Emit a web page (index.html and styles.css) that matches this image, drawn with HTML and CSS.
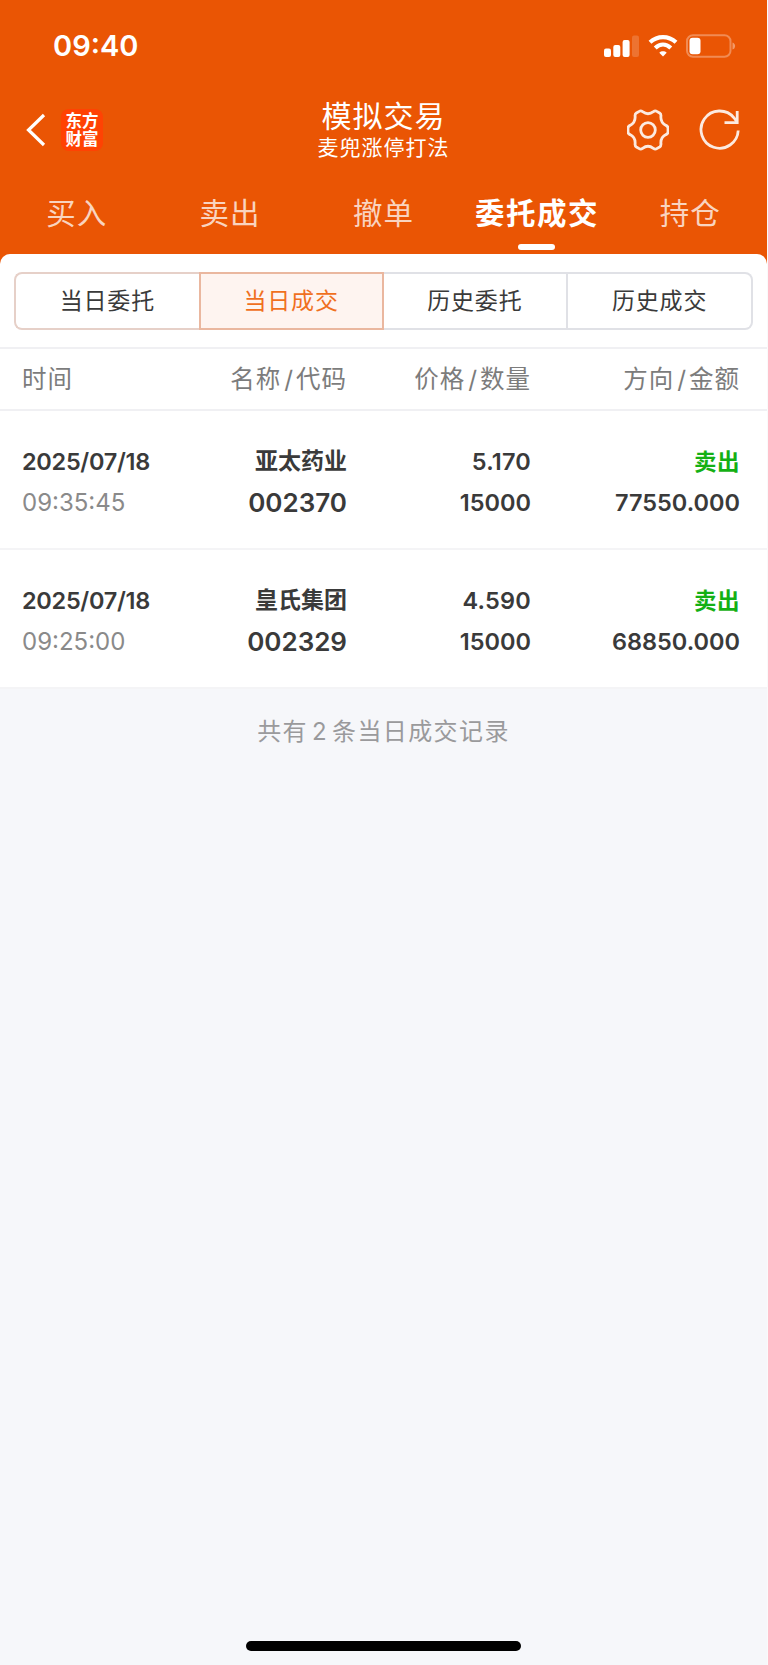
FILE: index.html
```html
<!DOCTYPE html>
<html lang="zh-CN">
<head>
  <meta charset="UTF-8">
  <meta name="viewport" content="width=device-width, initial-scale=1.0">
  <title>模拟交易</title>
  <link rel="stylesheet" href="styles.css">
</head>
<body>
  <div class="page">
    <header class="header">
      <div class="status-bar">
        <span class="status-time">09:40</span>
        <div class="status-icons">
          <svg class="signal" viewBox="0 0 36 24">
            <rect x="0" y="14.5" width="7" height="8.5" rx="2"/>
            <rect x="9.3" y="11" width="7" height="12" rx="2"/>
            <rect x="18.6" y="6" width="7" height="17" rx="2"/>
            <rect x="28" y="1.5" width="7" height="21.5" rx="2" opacity="0.18"/>
          </svg>
          <svg class="wifi" viewBox="0 0 30 24">
            <path d="M2 8.200C9.500 1.400 20.500 1.400 28 8.200"/>
            <path d="M7.200 14C12 9.600 18 9.600 22.800 14"/>
            <path class="wifi-dot" d="M15 22.500L11.300 18.700C13.300 16.800 16.700 16.800 18.700 18.700Z"/>
          </svg>
          <svg class="battery" viewBox="0 0 50 24">
            <rect class="battery-case" x="1" y="1.200" width="43.500" height="21.600" rx="6"/>
            <rect class="battery-level" x="3.500" y="3.700" width="11" height="16.600" rx="3"/>
            <path class="battery-cap" d="M46.500 8.500C50 9.500 50 14.500 46.500 15.500Z"/>
          </svg>
        </div>
      </div>

      <div class="nav-bar">
        <div class="nav-left">
          <svg class="back-icon" viewBox="0 0 20 34">
            <polyline points="18,2 2.500,17 18,32"/>
          </svg>
          <div class="brand"><span>东方</span><span>财富</span></div>
        </div>
        <div class="nav-title">
          <div class="title">模拟交易</div>
          <div class="subtitle">麦兜涨停打法</div>
        </div>
        <div class="nav-right">
          <svg class="nav-icon" viewBox="0 0 42 42">
            <path d="M12.200 2.400Q13.800 1.300 15.600 2.700Q21 6.700 26.400 2.700Q28.200 1.300 29.800 2.400L32.600 4Q34.200 5 33.900 7.200Q33.400 13.600 39 16.400Q41 17.300 41 19.200V22.800Q41 24.700 39 25.600Q33.400 28.400 33.900 34.800Q34.200 37 32.600 38L29.800 39.600Q28.200 40.700 26.400 39.300Q21 35.300 15.600 39.300Q13.800 40.700 12.200 39.600L9.400 38Q7.800 37 8.100 34.800Q8.600 28.400 3 25.600Q1 24.700 1 22.800V19.200Q1 17.300 3 16.400Q8.600 13.600 8.100 7.200Q7.800 5 9.400 4Z"/>
            <circle cx="21" cy="21" r="7.300"/>
          </svg>
          <svg class="nav-icon" viewBox="0 0 42 42">
            <path d="M39.200 21.500A18.600 18.600 0 1 1 35 8.800L38 13"/>
            <polyline points="38.200,2 38.200,13.600 25.500,13.600"/>
          </svg>
        </div>
      </div>

      <nav class="tabs">
        <div class="tab">买入</div>
        <div class="tab">卖出</div>
        <div class="tab">撤单</div>
        <div class="tab active">委托成交</div>
        <div class="tab">持仓</div>
      </nav>
    </header>

    <main class="sheet">
      <div class="segments">
        <div class="segment first">当日委托</div>
        <div class="segment selected">当日成交</div>
        <div class="segment">历史委托</div>
        <div class="segment">历史成交</div>
      </div>

      <div class="grid list-head">
        <div>时间</div>
        <div>名称<span class="slash">/</span>代码</div>
        <div>价格<span class="slash">/</span>数量</div>
        <div>方向<span class="slash">/</span>金额</div>
      </div>

      <div class="grid record">
        <div class="date">2025/07/18</div>
        <div class="name">亚太药业</div>
        <div class="price">5.170</div>
        <div class="side">卖出</div>
        <div class="time">09:35:45</div>
        <div class="code">002370</div>
        <div class="num">15000</div>
        <div class="num">77550.000</div>
      </div>

      <div class="grid record">
        <div class="date">2025/07/18</div>
        <div class="name">皇氏集团</div>
        <div class="price">4.590</div>
        <div class="side">卖出</div>
        <div class="time">09:25:00</div>
        <div class="code">002329</div>
        <div class="num">15000</div>
        <div class="num">68850.000</div>
      </div>
    </main>

    <p class="summary">共有<span class="count">2</span>条当日成交记录</p>
    <div class="home-indicator"></div>
  </div>
</body>
</html>
```

FILE: styles.css
```css
:root {
  --brand: #ea5504;
  --page: #f6f7fa;
  --line: #f0f0f3;
  --text: #3a3a3a;
  --muted: #7c7c7c;
}

* {
  box-sizing: border-box;
}

body {
  margin: 0;
  background-color: #fafafa;
  font-family: Inter, "Noto Sans CJK SC", sans-serif;
  color: var(--text);
}

.page {
  display: flex;
  flex-direction: column;
  width: 767px;
  height: 1665px;
  background-color: var(--page);
}

/* Header */
.header {
  height: 264px;
  padding-top: 26px;
  background-color: var(--brand);
  color: #fff;
}

.status-bar {
  display: flex;
  align-items: center;
  justify-content: space-between;
  height: 40px;
  padding: 0 31px 0 53px;
}

.status-time {
  font-size: 29px;
  font-weight: 600;
  line-height: 40px;
}

.status-icons {
  display: flex;
  align-items: center;
  gap: 8px;
}

.status-icons svg {
  display: block;
  height: 24px;
}

.signal {
  width: 36px;
  fill: #fff;
}

.wifi {
  width: 30px;
  fill: none;
  stroke: #fff;
  stroke-width: 4.2;
}

.wifi-dot {
  fill: #fff;
  stroke: none;
}

.battery {
  width: 50px;
}

.battery-case {
  fill: none;
  stroke: #fff;
  stroke-width: 2;
  opacity: 0.32;
}

.battery-level {
  fill: #fff;
}

.battery-cap {
  fill: #fff;
  opacity: 0.4;
}

.nav-bar {
  display: grid;
  grid-template-columns: 1fr auto 1fr;
  align-items: center;
  height: 80px;
  margin-top: 24px;
  padding: 0 26px;
}

.nav-left {
  display: flex;
  align-items: center;
  gap: 15px;
}

.back-icon {
  width: 20px;
  height: 34px;
  fill: none;
  stroke: #fff;
  stroke-width: 3.2;
}

.brand {
  display: flex;
  flex-direction: column;
  align-items: center;
  justify-content: center;
  width: 42px;
  height: 42px;
  border-radius: 8px;
  background-color: #ff4203;
  font-size: 16.5px;
  font-weight: 700;
  line-height: 18px;
}

.nav-title {
  text-align: center;
}

.title {
  font-size: 30px;
  line-height: 36px;
  letter-spacing: 1px;
}

.subtitle {
  font-size: 21px;
  line-height: 28px;
  letter-spacing: 1px;
}

.nav-right {
  display: flex;
  justify-content: flex-end;
  gap: 30px;
}

.nav-icon {
  width: 42px;
  height: 42px;
  fill: none;
  stroke: #fff;
  stroke-width: 2.8;
  opacity: 0.88;
}

.tabs {
  display: grid;
  grid-template-columns: repeat(5, 1fr);
  margin-top: 18px;
}

.tab {
  display: flex;
  flex-direction: column;
  align-items: center;
  font-size: 29.5px;
  line-height: 50px;
  letter-spacing: 1px;
  color: rgba(255, 255, 255, 0.75);
}

.tab.active {
  color: #fff;
  font-weight: 600;
  letter-spacing: 1.5px;
}

.tab.active::after {
  content: "";
  width: 37px;
  height: 6px;
  margin-top: 6px;
  border-radius: 3px;
  background-color: #fff;
}

/* Records */
.sheet {
  margin-top: -10px;
  padding-top: 18px;
  border-radius: 10px 10px 0 0;
  background-color: #fff;
}

.segments {
  display: grid;
  grid-template-columns: repeat(4, 1fr);
  height: 57px;
  margin: 0 14px 18px;
}

.segment {
  border: 2px solid #e0e1e6;
  border-left: none;
  text-align: center;
  font-size: 23px;
  line-height: 54px;
  letter-spacing: 0.8px;
}

.segment.first {
  border: 2px solid #e6d0c8;
  border-right: none;
  border-radius: 8px 0 0 8px;
}

.segment:last-child {
  border-radius: 0 8px 8px 0;
}

.segment.selected {
  border: 2px solid #eab79f;
  background-color: #fef4f0;
  color: #f0701e;
}

.grid {
  display: grid;
  grid-template-columns: 138px 187px 184px 209px;
  padding: 0 27px 0 22px;
  text-align: right;
}

.grid > :nth-child(4n + 1) {
  text-align: left;
}

.list-head {
  height: 64px;
  border-top: 2px solid var(--line);
  border-bottom: 2px solid var(--line);
  font-size: 24.5px;
  line-height: 61px;
  letter-spacing: 1px;
  color: var(--muted);
}

.slash {
  margin: 0 2px 0 3px;
}

.record {
  height: 139px;
  padding-top: 30px;
  grid-auto-rows: 41px;
  border-bottom: 2px solid #f4f4f6;
  font-size: 24px;
  font-weight: 600;
  line-height: 41px;
}

.date {
  white-space: nowrap;
  font-size: 23.5px;
  letter-spacing: -0.3px;
}

.time {
  font-weight: 400;
  color: #8a8a8a;
}

.name {
  font-size: 23px;
}

.price {
  font-size: 23.5px;
  letter-spacing: 0.2px;
}

.code {
  font-size: 26px;
}

.num {
  font-size: 23.5px;
}

.side {
  font-size: 22.5px;
  letter-spacing: 0.5px;
  color: #14b014;
}

/* Footer */
.summary {
  margin: 26px 0 0;
  text-align: center;
  font-size: 24px;
  line-height: 34px;
  letter-spacing: 1.4px;
  color: #9a9a9c;
}

.count {
  margin: 0 4px;
}

.home-indicator {
  width: 275px;
  height: 10px;
  margin: auto auto 14px;
  border-radius: 5px;
  background-color: #000;
}
```
